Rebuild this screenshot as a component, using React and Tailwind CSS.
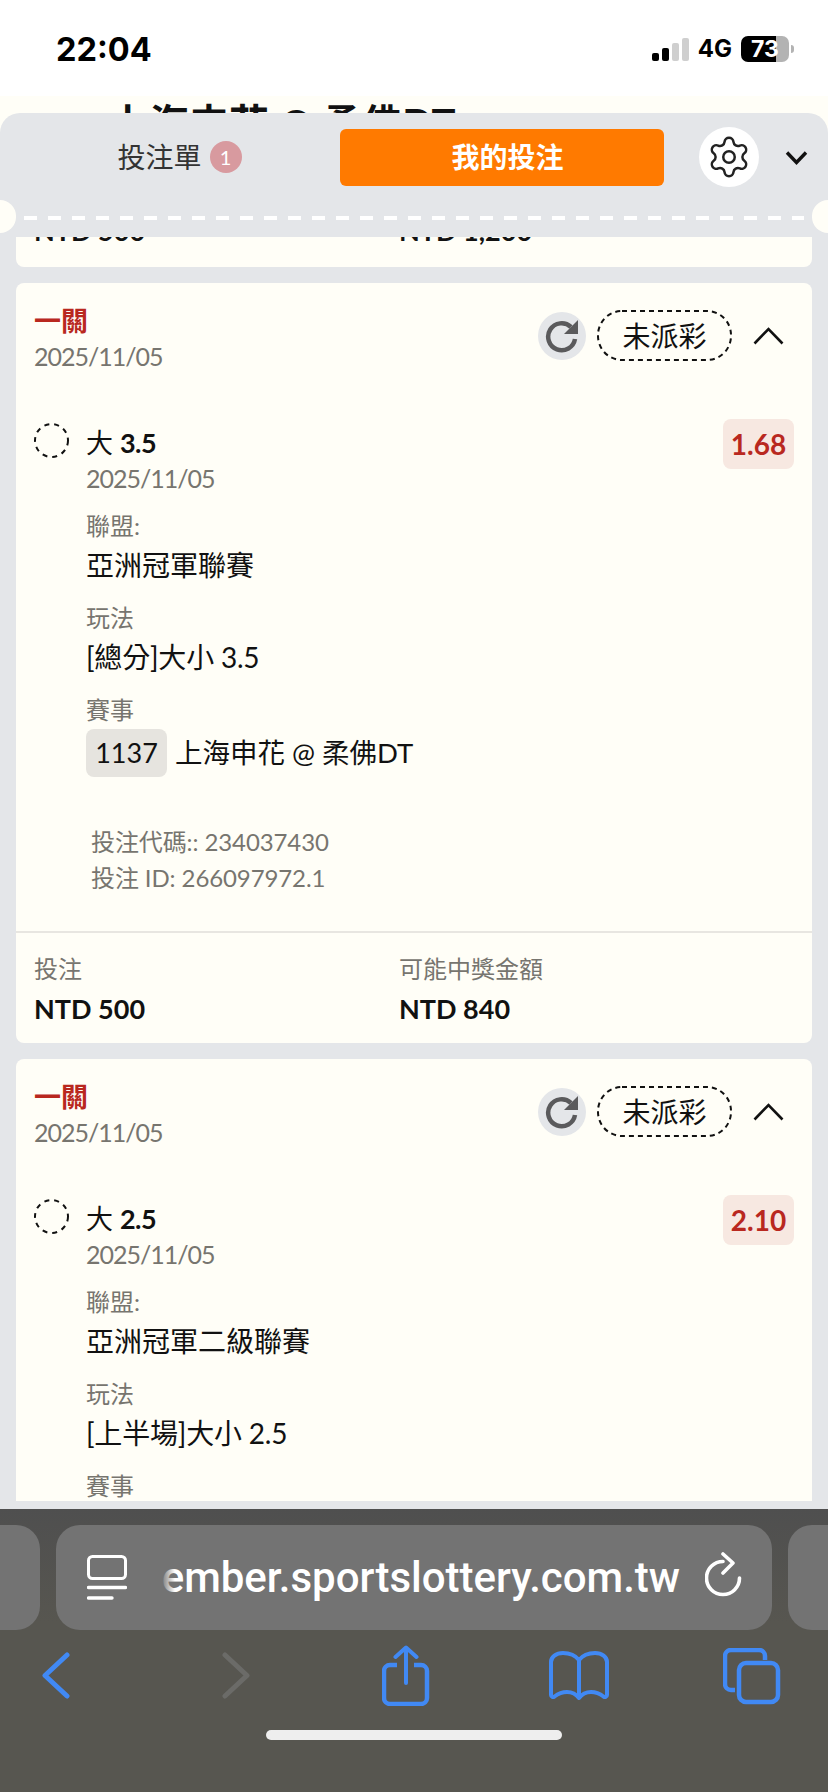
import { Settings } from 'lucide-react';

const font = "font-['Lato','Noto_Sans_CJK_TC',sans-serif]";
const sys = "font-['Inter','Noto_Sans_CJK_TC',sans-serif]";

const bets = [
  {
    pick: '3.5',
    odds: '1.68',
    league: '亞洲冠軍聯賽',
    play: '[總分]大小 3.5',
    match: '上海申花 @ 柔佛DT',
    code: '234037430',
    id: '266097972.1',
    stake: 'NTD 500',
    win: 'NTD 840',
  },
  {
    pick: '2.5',
    odds: '2.10',
    league: '亞洲冠軍二級聯賽',
    play: '[上半場]大小 2.5',
    match: '上海申花 @ 柔佛DT',
    code: '234037431',
    id: '266097973.1',
    stake: 'NTD 500',
    win: 'NTD 1,050',
  },
];

function RefreshIcon() {
  return (
    <svg width="34" height="34" viewBox="0 0 34 34" fill="none">
      <path d="M26 8A13.500 13.500 0 1 0 30 20" stroke="#5a5a5c" strokeWidth="4.500" />
      <path d="M33 1V15H19Z" fill="#5a5a5c" />
    </svg>
  );
}

function BetCard({ bet }) {
  return (
    <div className="shrink-0 rounded-lg bg-[#fffef7]">
      <div className="flex justify-between pl-[18px] pr-[28px] pt-[21px]">
        <div>
          <div className="text-[27px] leading-[34px] font-bold text-[#b9281f]">一關</div>
          <div className="mt-[3px] text-[25px] leading-[30px] tracking-[-1px] text-[#77756f]">2025/11/05</div>
        </div>
        <div className="mt-[6px] flex h-[51px] items-center">
          <div className="flex h-[48px] w-[48px] items-center justify-center rounded-full bg-[#e4e6e9]">
            <RefreshIcon />
          </div>
          <div className="relative ml-[11px] flex h-[51px] w-[135px] items-center justify-center text-[28px] text-[#111]">
            未派彩
            <svg className="absolute inset-0" width="135" height="51" fill="none">
              <rect x="1" y="1" width="133" height="49" rx="24" stroke="#111" strokeWidth="2" strokeDasharray="5 4" />
            </svg>
          </div>
          <svg className="ml-[21px]" width="31" height="18" viewBox="0 0 31 18" fill="none">
            <path d="M1.500 16.500L15.500 2L29.500 16.500" stroke="#111" strokeWidth="2.600" />
          </svg>
        </div>
      </div>

      <div className="mt-[55px] flex pl-[18px] pr-[18px]">
        <svg className="mt-[-3px] shrink-0" width="35" height="35" fill="none">
          <circle cx="17.500" cy="17.500" r="16.500" stroke="#111" strokeWidth="2" strokeDasharray="5 5" />
        </svg>
        <div className="ml-[17px] flex-1">
          <div className="text-[27px] leading-[34px] text-[#111]">大 <span className="font-bold tracking-[-0.5px]">{bet.pick}</span></div>
          <div className="mt-[3px] text-[25px] leading-[30px] tracking-[-1px] text-[#77756f]">2025/11/05</div>
          <div className="mt-[18px] text-[24px] leading-[30px] text-[#77756f]">聯盟:</div>
          <div className="mt-[6px] text-[28px] leading-[36px] text-[#111]">{bet.league}</div>
          <div className="mt-[20px] text-[24px] leading-[30px] text-[#77756f]">玩法</div>
          <div className="mt-[6px] text-[28px] leading-[36px] tracking-[-0.2px] text-[#111]">{bet.play}</div>
          <div className="mt-[20px] text-[24px] leading-[30px] text-[#77756f]">賽事</div>
          <div className="mt-[4px] flex items-center">
            <span className="flex h-[48px] w-[81px] items-center justify-center rounded-lg bg-[#e6e4df] text-[27px] text-[#111]">1137</span>
            <span className="ml-[8px] text-[27.500px] text-[#111]">{bet.match}</span>
          </div>
        </div>
        <div className="mt-[-7px] flex h-[50px] w-[71px] shrink-0 items-center justify-center rounded-lg bg-[#f7e8e1] text-[28px] font-bold text-[#b9281f]">
          {bet.odds}
        </div>
      </div>

      <div className="mt-[47px] pl-[75px] text-[24px] leading-[36px] tracking-[-0.1px] text-[#77756f]">
        <div>投注代碼:: {bet.code}</div>
        <div>投注 ID: {bet.id}</div>
      </div>

      <div className="mt-[35px] grid grid-cols-[365px_1fr] border-t-2 border-[#e8e6e1] pb-[17px] pl-[18px] pt-[21px]">
        <div>
          <div className="text-[24px] leading-[30px] text-[#77756f]">投注</div>
          <div className="mt-[8px] text-[27px] leading-[34px] font-bold text-[#111]">{bet.stake}</div>
        </div>
        <div>
          <div className="text-[24px] leading-[30px] text-[#77756f]">可能中獎金額</div>
          <div className="mt-[8px] text-[27px] leading-[34px] font-bold text-[#111]">{bet.win}</div>
        </div>
      </div>
    </div>
  );
}

function StatusBar() {
  return (
    <div className={`flex h-[96px] items-start justify-between bg-white pl-[56px] pr-[34px] pt-[33px] ${sys}`}>
      <div className="text-[32.500px] leading-[34px] font-bold text-black">22:04</div>
      <div className="flex items-center pt-[3px]">
        <div className="flex h-[23px] items-end gap-[3px]">
          <div className="h-[8px] w-[7px] rounded-[2px] bg-black" />
          <div className="h-[13px] w-[7px] rounded-[2px] bg-black" />
          <div className="h-[18px] w-[7px] rounded-[2px] bg-[#cfcfcf]" />
          <div className="h-[23px] w-[7px] rounded-[2px] bg-[#cfcfcf]" />
        </div>
        <div className="ml-[9px] text-[24px] leading-[26px] font-bold text-black">4G</div>
        <div className="ml-[9px] flex h-[26px] w-[48px] items-center justify-center rounded-[7px] bg-[linear-gradient(90deg,#000_73%,#b3b3b3_73%)] text-[23px] leading-[26px] font-bold text-white">
          73
        </div>
        <div className="ml-[2px] h-[8px] w-[3px] rounded-r-full bg-[#b3b3b3]" />
      </div>
    </div>
  );
}

function SheetHeader() {
  return (
    <div className="relative h-[124px] shrink-0 rounded-t-[20px] bg-[#e4e6e9] px-[16px] pt-[14px]">
      <div className="flex h-[60px] items-center">
        <div className="flex w-[324px] items-center justify-center pl-[3px]">
          <span className="text-[28px] text-[#333]">投注單</span>
          <span className="ml-[8px] flex h-[32px] w-[32px] items-center justify-center rounded-full bg-[#d89a9f] text-[20px] text-white">1</span>
        </div>
        <div className="flex h-[57px] w-[324px] items-center justify-center rounded-md bg-[#ff7a00] pl-[11px] text-[28px] font-bold text-white">
          我的投注
        </div>
        <div className="ml-[35px] flex h-[60px] w-[60px] items-center justify-center rounded-full bg-white">
          <Settings size={46} strokeWidth={1.3} color="#222" />
        </div>
        <svg className="ml-[26px]" width="23" height="15" viewBox="0 0 23 15" fill="none">
          <path d="M2 2.500L11.500 12.500L21 2.500" stroke="#111" strokeWidth="3.400" />
        </svg>
      </div>
      <div className="mx-[8px] mt-[29px] h-[4px] bg-[repeating-linear-gradient(90deg,#fff_0,#fff_13px,transparent_13px,transparent_24px)]" />
      <div className="absolute left-[-16px] top-[87px] h-[33px] w-[32px] rounded-full bg-[#fffef7]" />
      <div className="absolute right-[-16px] top-[87px] h-[33px] w-[32px] rounded-full bg-[#fffef7]" />
    </div>
  );
}

function BrowserBar() {
  return (
    <div className="h-[283px] shrink-0 bg-[linear-gradient(180deg,#4f4f4f,#575650_40%)] pt-[16px]">
      <div className="flex h-[105px] gap-[16px]">
        <div className="w-[40px] rounded-r-[24px] bg-[#737373]" />
        <div className="flex w-[716px] items-center rounded-[24px] bg-[#737373] pl-[31px] pr-[29px]">
          <svg width="40" height="46" viewBox="0 0 40 46" fill="none">
            <rect x="1.500" y="1.500" width="37" height="22" rx="4" stroke="white" strokeWidth="3" />
            <path d="M1.500 32.500H38.500M1.500 43H25" stroke="white" strokeWidth="3.400" strokeLinecap="round" />
          </svg>
          <div className="relative ml-[34px] flex w-[519px] shrink-0 justify-end overflow-hidden font-['Roboto',sans-serif] text-[42px] leading-[50px] font-medium text-white">
            <span className="whitespace-nowrap">member.sportslottery.com.tw</span>
            <div className="absolute left-0 top-0 h-full w-[14px] bg-[linear-gradient(90deg,#737373,transparent)]" />
          </div>
          <svg className="ml-auto mt-[-5px]" width="38" height="46" viewBox="0 0 38 46" fill="none">
            <path d="M18 9.500A16.500 16.500 0 1 0 34.500 26" stroke="white" strokeWidth="3.600" strokeLinecap="round" />
            <path d="M18 2L28 11L18 21" stroke="white" strokeWidth="3.600" strokeLinecap="round" strokeLinejoin="round" />
          </svg>
        </div>
        <div className="w-[40px] rounded-l-[24px] bg-[#737373]" />
      </div>
      <div className="mt-[15px] flex h-[61px] items-center pl-[42px]">
        <svg width="28" height="47" viewBox="0 0 28 47" fill="none">
          <path d="M25 3L3 23.500L25 44" stroke="#4189f4" strokeWidth="5" strokeLinecap="round" strokeLinejoin="round" />
        </svg>
        <svg className="ml-[152px]" width="28" height="47" viewBox="0 0 28 47" fill="none">
          <path d="M3 3L25 23.500L3 44" stroke="#6b6b68" strokeWidth="5" strokeLinecap="round" strokeLinejoin="round" />
        </svg>
        <svg className="ml-[132px]" width="48" height="61" viewBox="0 0 48 61" fill="none">
          <path d="M15 20H8a6 6 0 0 0-6 6v27a6 6 0 0 0 6 6h31a6 6 0 0 0 6-6V26a6 6 0 0 0-6-6h-7" stroke="#4189f4" strokeWidth="4.500" />
          <path d="M24 38V3M13.500 12L24 2.500L34.500 12" stroke="#4189f4" strokeWidth="4" strokeLinecap="round" strokeLinejoin="round" />
        </svg>
        <svg className="ml-[119px]" width="60" height="50" viewBox="0 0 60 50" fill="none">
          <path d="M30 9C26 4 20 2 14 2C7 2 2 6 2 11V44c0 2 2 2.500 3.500 1.500C10 42 14 41 18 41C23 41 27 43 30 47C33 43 37 41 42 41C46 41 50 42 54.500 45.500C56 46.500 58 46 58 44V11C58 6 53 2 46 2C40 2 34 4 30 9ZM30 9V46" stroke="#4189f4" strokeWidth="4" strokeLinejoin="round" />
        </svg>
        <svg className="ml-[114px] mt-[3px]" width="58" height="58" viewBox="0 0 58 58" fill="none">
          <path d="M12 42H8a6 6 0 0 1-6-6V8a6 6 0 0 1 6-6h28a6 6 0 0 1 6 6v4" stroke="#4189f4" strokeWidth="4.500" />
          <rect x="16" y="15" width="39" height="39" rx="7" stroke="#4189f4" strokeWidth="4.500" />
        </svg>
      </div>
      <div className="ml-[266px] mt-[24px] h-[10px] w-[296px] rounded-full bg-[#eeeeee]" />
    </div>
  );
}

export default function App() {
  return (
    <div className={`flex h-[1792px] w-[828px] flex-col overflow-hidden bg-white ${font}`}>
      <StatusBar />
      <div className="flex min-h-0 flex-1 flex-col bg-[#fffef7]">
        <div className="h-[17px] shrink-0 overflow-hidden pl-[109px] text-[40px] leading-[54px] font-bold text-[#111]">
          <span className="whitespace-nowrap">上海申花 @ 柔佛DT</span>
        </div>
        <SheetHeader />
        <div className="flex min-h-0 flex-1 flex-col gap-[16px] overflow-hidden bg-[#e4e6e9] px-[16px]">
          <div className="flex h-[30px] shrink-0 overflow-hidden rounded-b-lg bg-[#fffef7]">
            <div className="mt-[-23px] w-[383px] pl-[18px] text-[27px] leading-[34px] font-bold text-[#111]">NTD 500</div>
            <div className="mt-[-23px] text-[27px] leading-[34px] font-bold text-[#111]">NTD 1,200</div>
          </div>
          {bets.map((bet, i) => <BetCard key={i} bet={bet} />)}
        </div>
        <div className="h-[8px] shrink-0 bg-[#e4e6e9]" />
      </div>
      <BrowserBar />
    </div>
  );
}
